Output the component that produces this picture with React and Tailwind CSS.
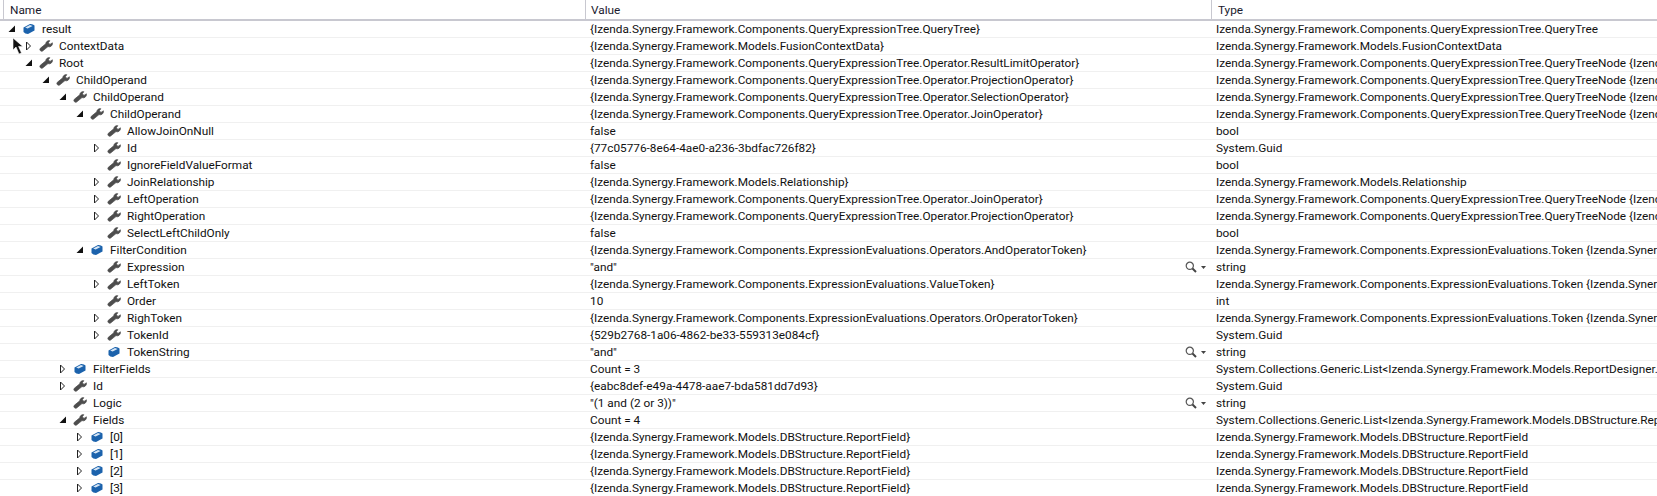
const FONT = "font-['Roboto','Liberation_Sans',sans-serif]";

const QE = 'Izenda.Synergy.Framework.Components.QueryExpressionTree';
const EE = 'Izenda.Synergy.Framework.Components.ExpressionEvaluations';
const NODE = `${QE}.QueryTreeNode {Izenda.Synergy.Framework.Components.QueryExpressionTree.Operator}`;
const TOKEN = `${EE}.Token {Izenda.Synergy.Framework.Components.ExpressionEvaluations.Operators}`;
const FIELD = 'Izenda.Synergy.Framework.Models.DBStructure.ReportField';

// [level, arrow, icon, name, value, type, magnifier]
const rows = [
  [0, 'open', 'cube', 'result', `{${QE}.QueryTree}`, `${QE}.QueryTree`],
  [1, 'closed', 'wrench', 'ContextData', '{Izenda.Synergy.Framework.Models.FusionContextData}', 'Izenda.Synergy.Framework.Models.FusionContextData'],
  [1, 'open', 'wrench', 'Root', `{${QE}.Operator.ResultLimitOperator}`, NODE],
  [2, 'open', 'wrench', 'ChildOperand', `{${QE}.Operator.ProjectionOperator}`, NODE],
  [3, 'open', 'wrench', 'ChildOperand', `{${QE}.Operator.SelectionOperator}`, NODE],
  [4, 'open', 'wrench', 'ChildOperand', `{${QE}.Operator.JoinOperator}`, NODE],
  [5, null, 'wrench', 'AllowJoinOnNull', 'false', 'bool'],
  [5, 'closed', 'wrench', 'Id', '{77c05776-8e64-4ae0-a236-3bdfac726f82}', 'System.Guid'],
  [5, null, 'wrench', 'IgnoreFieldValueFormat', 'false', 'bool'],
  [5, 'closed', 'wrench', 'JoinRelationship', '{Izenda.Synergy.Framework.Models.Relationship}', 'Izenda.Synergy.Framework.Models.Relationship'],
  [5, 'closed', 'wrench', 'LeftOperation', `{${QE}.Operator.JoinOperator}`, NODE],
  [5, 'closed', 'wrench', 'RightOperation', `{${QE}.Operator.ProjectionOperator}`, NODE],
  [5, null, 'wrench', 'SelectLeftChildOnly', 'false', 'bool'],
  [4, 'open', 'cube', 'FilterCondition', `{${EE}.Operators.AndOperatorToken}`, TOKEN],
  [5, null, 'wrench', 'Expression', '"and"', 'string', true],
  [5, 'closed', 'wrench', 'LeftToken', `{${EE}.ValueToken}`, TOKEN],
  [5, null, 'wrench', 'Order', '10', 'int'],
  [5, 'closed', 'wrench', 'RighToken', `{${EE}.Operators.OrOperatorToken}`, TOKEN],
  [5, 'closed', 'wrench', 'TokenId', '{529b2768-1a06-4862-be33-559313e084cf}', 'System.Guid'],
  [5, null, 'cube', 'TokenString', '"and"', 'string', true],
  [3, 'closed', 'cube', 'FilterFields', 'Count = 3', 'System.Collections.Generic.List<Izenda.Synergy.Framework.Models.ReportDesigner.ReportFilterField>'],
  [3, 'closed', 'wrench', 'Id', '{eabc8def-e49a-4478-aae7-bda581dd7d93}', 'System.Guid'],
  [3, null, 'wrench', 'Logic', '"(1 and (2 or 3))"', 'string', true],
  [3, 'open', 'wrench', 'Fields', 'Count = 4', 'System.Collections.Generic.List<Izenda.Synergy.Framework.Models.DBStructure.ReportField>'],
  [4, 'closed', 'cube', '[0]', `{${FIELD}}`, FIELD],
  [4, 'closed', 'cube', '[1]', `{${FIELD}}`, FIELD],
  [4, 'closed', 'cube', '[2]', `{${FIELD}}`, FIELD],
  [4, 'closed', 'cube', '[3]', `{${FIELD}}`, FIELD],
];

const Arrow = ({ kind }) => (
  <svg width="9" height="11" viewBox="0 0 9 11" className="shrink-0">
    {kind === 'open' && <path d="M8 1.5 V8 H1.5 Z" fill="#111" />}
    {kind === 'closed' && <path d="M2.5 1 L6.5 5 L2.5 9 Z" fill="#fff" stroke="#222" strokeWidth="1" />}
  </svg>
);

const Wrench = () => (
  <svg width="14" height="14" viewBox="0 0 14 14" className="shrink-0">
    <path d="M13.4 3.8 A3.3 3.3 0 0 1 9 7.6 L3.6 12 A1.8 1.8 0 0 1 1.3 9.3 L6.8 4.8 A3.3 3.3 0 0 1 10.8 1.7 L9.3 3.8 L11 5.4 Z" fill="#4d4d4d" stroke="#4d4d4d" strokeWidth="0.7" strokeLinejoin="round" />
  </svg>
);

const Cube = () => (
  <svg width="14" height="14" viewBox="0 0 14 14" className="shrink-0">
    <path d="M1.5 5.5 L8 2 Q11 1.8 12.5 3.5 V8.5 L6 12 Q3 12 1.5 10 Z" fill="#1b62ac" />
    <path d="M3.2 5.4 L8 3 L10.6 3.9 L5.6 6.4 Z" fill="#d7e6f5" />
  </svg>
);

const Magnifier = () => (
  <div className="flex items-center gap-[4px] pr-[5px]">
    <svg width="12" height="12" viewBox="0 0 12 12">
      <circle cx="4.8" cy="4.8" r="3.6" fill="none" stroke="#555" strokeWidth="1.2" />
      <path d="M7.5 7.5 L11 11" stroke="#444" strokeWidth="2" />
    </svg>
    <svg width="5" height="3" viewBox="0 0 5 3">
      <path d="M0 0 H5 L2.5 3 Z" fill="#444" />
    </svg>
  </div>
);

const Row = ({ row }) => {
  const [level, arrow, icon, name, value, type, search] = row;
  return (
    <div className="grid grid-cols-[585px_626px_1fr] h-[17px] border-b border-[#f0f0f0] box-border">
      <div className="flex items-center overflow-hidden pl-[7px]">
        <div className="h-full shrink-0" style={{ width: level * 17 }} />
        <Arrow kind={arrow} />
        <div className="w-[6px] shrink-0" />
        <div className="w-[20px] shrink-0">{icon === 'cube' ? <Cube /> : <Wrench />}</div>
        <span className="whitespace-nowrap">{name}</span>
      </div>
      <div className="flex items-center justify-between overflow-hidden pl-[5px]">
        <span className="whitespace-nowrap">{value}</span>
        {search && <Magnifier />}
      </div>
      <div className="flex items-center overflow-hidden pl-[5px]">
        <span className="whitespace-nowrap">{type}</span>
      </div>
    </div>
  );
};

export default function App() {
  return (
    <div className={`${FONT} relative w-[1657px] h-[496px] overflow-hidden bg-white text-[11.8px] leading-[16px] text-[#111111]`}>
      <div className="grid grid-cols-[585px_626px_1fr] h-[21px] border-b-2 border-[#c8c8d0] box-border text-[#1a1a2e]">
        <div className="flex items-center"><div className="flex h-full items-center border-l border-[#c8c8d0] ml-[3px] pl-[6px]">Name</div></div>
        <div className="flex items-center border-l border-[#c8c8d0] pl-[5px]">Value</div>
        <div className="flex items-center border-l border-[#c8c8d0] pl-[6px]">Type</div>
      </div>
      {rows.map((row, i) => (
        <Row key={i} row={row} />
      ))}
      {/* mouse pointer sits over the tree */}
      <svg width="12" height="18" viewBox="0 0 12 18" className="absolute left-[12px] top-[37px]">
        <path d="M1 1 V13 L4 10 L7 17 L9.5 16 L6.6 9.4 H10.8 Z" fill="#111" stroke="#fff" strokeWidth="0.6" />
      </svg>
    </div>
  );
}
